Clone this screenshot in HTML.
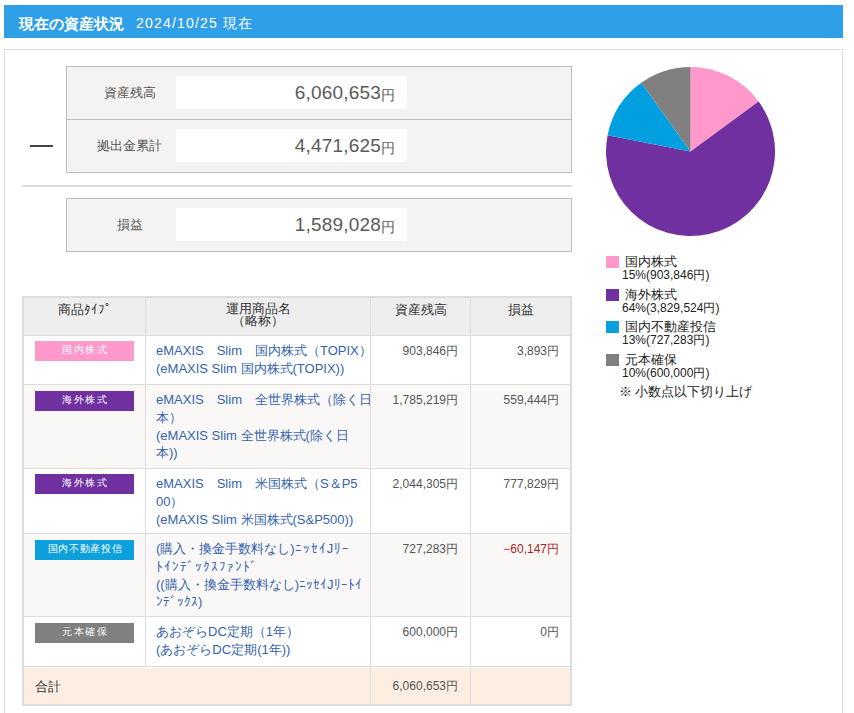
<!DOCTYPE html>
<html><head><meta charset="utf-8">
<style>
*{margin:0;padding:0;box-sizing:border-box}
html,body{width:854px;height:713px;overflow:hidden;background:#fff;font-family:"Liberation Sans",sans-serif;color:#333}
.abs{position:absolute}
#bar{left:4px;top:5px;width:839px;height:33px;background:#2fa0e7;color:#fff}
#bar .t{position:absolute;left:15px;top:10px;font-size:15px;font-weight:bold;line-height:17px;white-space:nowrap}
#bar .d{position:absolute;left:132px;top:10px;font-size:14px;line-height:17px;letter-spacing:1.2px;white-space:nowrap}
#box{left:4px;top:49px;width:839px;height:700px;border:1px solid #ddd}
.sum{left:66px;width:506px;background:#f4f3f2;border:1px solid #bdbdbd}
.srow{position:absolute;left:0;width:504px;height:52px}
.lab{position:absolute;left:0;width:125px;top:18px;text-align:center;font-size:13px;line-height:16px;color:#555;white-space:nowrap}
.val{position:absolute;left:109px;top:9px;width:231px;height:33px;background:#fff;text-align:right;padding-right:12px;white-space:nowrap;color:#5a5a5a}
.val .n{font-size:19px;line-height:33px;letter-spacing:0.2px}
.val .y{font-size:14px;position:relative;top:1px}
#minus{left:30px;top:145px;width:23px;height:2px;background:#444}
#div{left:22px;top:185px;width:550px;height:2px;background:#ddd}
#tbl{left:22px;top:296px;width:550px;border:2px solid #ddd;border-collapse:collapse}
.cell{position:absolute}
.badge{position:absolute;left:11px;width:99px;height:20px;color:#fff;font-size:10px;line-height:18px;text-align:center;letter-spacing:1.5px;white-space:nowrap;text-indent:1px}
.nm{position:absolute;left:10px;font-size:13px;line-height:17.8px;color:#3563ad;white-space:nowrap;overflow:hidden;width:214px}
.num{position:absolute;right:11px;font-size:12px;line-height:16px;color:#555;white-space:nowrap}
.hd{position:absolute;top:0;height:37px;font-size:13px;line-height:13px;color:#333;text-align:center;white-space:nowrap}
#legend{left:606px;top:255px;font-size:12px;color:#222}
.li{position:absolute;left:0;white-space:nowrap}
.sq{position:absolute;left:0;top:1px;width:13px;height:12px}
.l1{position:absolute;left:19px;top:0;font-size:13px;line-height:14px}
.l2{position:absolute;left:16px;top:14px;font-size:12px;line-height:13px;letter-spacing:0}
.tofu .j{letter-spacing:.25em;-webkit-text-stroke:.9px currentColor}.tofu .k{letter-spacing:-.25em}
</style></head><body>
<div id="bar" class="abs"><span class="t"><span class="j">現在の資産状況</span></span><span class="d">2024/10/25 <span class="j">現在</span></span></div>
<div id="box" class="abs"></div>

<div class="abs sum" style="top:66px;height:107px">
  <div class="srow" style="top:0"><div class="lab"><span class="j">資産残高</span></div><div class="val"><span class="n">6,060,653</span><span class="y"><span class="j">円</span></span></div></div>
  <div class="abs" style="left:0;top:52px;width:504px;height:1px;background:#bdbdbd"></div>
  <div class="srow" style="top:53px"><div class="lab"><span class="j">拠出金累計</span></div><div class="val"><span class="n">4,471,625</span><span class="y"><span class="j">円</span></span></div></div>
</div>
<div id="minus" class="abs"></div>
<div id="div" class="abs"></div>
<div class="abs sum" style="top:198px;height:54px">
  <div class="srow" style="top:0"><div class="lab"><span class="j">損益</span></div><div class="val"><span class="n">1,589,028</span><span class="y"><span class="j">円</span></span></div></div>
</div>

<!-- TABLE -->
<div id="table" class="abs" style="left:22px;top:296px;width:550px;height:410px;background:#ddd">
<div class="cell" style="left:2px;top:2px;width:121px;height:37px;background:#eee"></div>
<div class="cell" style="left:124px;top:2px;width:224px;height:37px;background:#eee"></div>
<div class="cell" style="left:349px;top:2px;width:99px;height:37px;background:#eee"></div>
<div class="cell" style="left:449px;top:2px;width:99px;height:37px;background:#eee"></div>
<div class="hd" style="left:2px;width:121px;top:7px"><span class="j">商品</span><span class="k">ﾀｲﾌﾟ</span></div>
<div class="hd" style="left:124px;width:224px;top:7px;line-height:12px"><span class="j">運用商品名</span><br><span class="j">（略称）</span></div>
<div class="hd" style="left:349px;width:99px;top:7px"><span class="j">資産残高</span></div>
<div class="hd" style="left:449px;width:99px;top:7px"><span class="j">損益</span></div>
<div class="cell" style="left:2px;top:40px;width:121px;height:48px;background:#fff"></div>
<div class="cell" style="left:124px;top:40px;width:224px;height:48px;background:#fff"></div>
<div class="cell" style="left:349px;top:40px;width:99px;height:48px;background:#fff"></div>
<div class="cell" style="left:449px;top:40px;width:99px;height:48px;background:#fff"></div>
<div class="badge" style="left:13px;top:45px;background:#ff99cc"><span class="j">国内株式</span></div>
<div class="nm" style="left:134px;top:46px">eMAXIS　Slim　<span class="j">国内株式（</span>TOPIX<span class="j">）</span><br>(eMAXIS Slim <span class="j">国内株式</span>(TOPIX))</div>
<div class="num" style="right:114px;top:47px">903,846<span class="j">円</span></div>
<div class="num" style="right:13px;top:47px">3,893<span class="j">円</span></div>
<div class="cell" style="left:2px;top:89px;width:121px;height:83px;background:#f9f8f7"></div>
<div class="cell" style="left:124px;top:89px;width:224px;height:83px;background:#f9f8f7"></div>
<div class="cell" style="left:349px;top:89px;width:99px;height:83px;background:#f9f8f7"></div>
<div class="cell" style="left:449px;top:89px;width:99px;height:83px;background:#f9f8f7"></div>
<div class="badge" style="left:13px;top:95px;background:#7030a0"><span class="j">海外株式</span></div>
<div class="nm" style="left:134px;top:95px">eMAXIS　Slim　<span class="j">全世界株式（除く日</span><br><span class="j">本）</span><br>(eMAXIS Slim <span class="j">全世界株式</span>(<span class="j">除く日</span><br><span class="j">本</span>))</div>
<div class="num" style="right:114px;top:96px">1,785,219<span class="j">円</span></div>
<div class="num" style="right:13px;top:96px">559,444<span class="j">円</span></div>
<div class="cell" style="left:2px;top:173px;width:121px;height:64px;background:#fff"></div>
<div class="cell" style="left:124px;top:173px;width:224px;height:64px;background:#fff"></div>
<div class="cell" style="left:349px;top:173px;width:99px;height:64px;background:#fff"></div>
<div class="cell" style="left:449px;top:173px;width:99px;height:64px;background:#fff"></div>
<div class="badge" style="left:13px;top:178px;background:#7030a0"><span class="j">海外株式</span></div>
<div class="nm" style="left:134px;top:179px">eMAXIS　Slim　<span class="j">米国株式（</span>S<span class="j">＆</span>P5<br>00<span class="j">）</span><br>(eMAXIS Slim <span class="j">米国株式</span>(S&amp;P500))</div>
<div class="num" style="right:114px;top:180px">2,044,305<span class="j">円</span></div>
<div class="num" style="right:13px;top:180px">777,829<span class="j">円</span></div>
<div class="cell" style="left:2px;top:238px;width:121px;height:82px;background:#f9f8f7"></div>
<div class="cell" style="left:124px;top:238px;width:224px;height:82px;background:#f9f8f7"></div>
<div class="cell" style="left:349px;top:238px;width:99px;height:82px;background:#f9f8f7"></div>
<div class="cell" style="left:449px;top:238px;width:99px;height:82px;background:#f9f8f7"></div>
<div class="badge" style="left:13px;top:244px;background:#0ca0dc;letter-spacing:0.7px"><span class="j">国内不動産投信</span></div>
<div class="nm" style="left:134px;top:244px">(<span class="j">購入・換金手数料なし</span>)<span style="letter-spacing:1px"><span class="k">ﾆｯｾｲ</span>J<span class="k">ﾘｰ</span></span><br><span style="letter-spacing:1px"><span class="k">ﾄｲﾝﾃﾞｯｸｽﾌｧﾝﾄﾞ</span></span><br>((<span class="j">購入・換金手数料なし</span>)<span class="k">ﾆｯｾｲ</span>J<span class="k">ﾘｰﾄｲ</span><br><span class="k">ﾝﾃﾞｯｸｽ</span>)</div>
<div class="num" style="right:114px;top:245px">727,283<span class="j">円</span></div>
<div class="num" style="right:13px;top:245px;color:#b01e1e">−60,147<span class="j">円</span></div>
<div class="cell" style="left:2px;top:321px;width:121px;height:49px;background:#fff"></div>
<div class="cell" style="left:124px;top:321px;width:224px;height:49px;background:#fff"></div>
<div class="cell" style="left:349px;top:321px;width:99px;height:49px;background:#fff"></div>
<div class="cell" style="left:449px;top:321px;width:99px;height:49px;background:#fff"></div>
<div class="badge" style="left:13px;top:327px;background:#808080"><span class="j">元本確保</span></div>
<div class="nm" style="left:134px;top:327px"><span class="j">あおぞら</span>DC<span class="j">定期（</span>1<span class="j">年）</span><br>(<span class="j">あおぞら</span>DC<span class="j">定期</span>(1<span class="j">年</span>))</div>
<div class="num" style="right:114px;top:328px">600,000<span class="j">円</span></div>
<div class="num" style="right:13px;top:328px">0<span class="j">円</span></div>
<div class="cell" style="left:2px;top:371px;width:546px;height:1px;background:#fff"></div>
<div class="cell" style="left:2px;top:372px;width:346px;height:36px;background:#fdeee2"></div>
<div class="cell" style="left:349px;top:372px;width:99px;height:36px;background:#fdeee2"></div>
<div class="cell" style="left:449px;top:372px;width:99px;height:36px;background:#fdeee2"></div>
<div class="nm" style="left:13px;top:382px;color:#333"><span class="j">合計</span></div>
<div class="num" style="right:114px;top:382px">6,060,653<span class="j">円</span></div>
</div>

<svg class="abs" style="left:606px;top:66.5px" width="169" height="169" viewBox="0 0 169 169">
<path fill="#ff99cc" d="M84.5,84.5 L84.50,0.00 A84.5,84.5 0 0 1 152.59,34.46 Z"/>
<path fill="#7030a0" d="M84.5,84.5 L152.59,34.46 A84.5,84.5 0 1 1 1.60,68.15 Z"/>
<path fill="#00a0e0" d="M84.5,84.5 L1.60,68.15 A84.5,84.5 0 0 1 35.26,15.83 Z"/>
<path fill="#808080" d="M84.5,84.5 L35.26,15.83 A84.5,84.5 0 0 1 84.50,0.00 Z"/>
</svg>

<div id="legend" class="abs">
<div class="li" style="top:0px"><div class="sq" style="background:#ff99cc"></div><div class="l1"><span class="j">国内株式</span></div><div class="l2">15%(903,846<span class="j">円</span>)</div></div>
<div class="li" style="top:32.5px"><div class="sq" style="background:#7030a0"></div><div class="l1"><span class="j">海外株式</span></div><div class="l2">64%(3,829,524<span class="j">円</span>)</div></div>
<div class="li" style="top:65px"><div class="sq" style="background:#0ca0dc"></div><div class="l1"><span class="j">国内不動産投信</span></div><div class="l2">13%(727,283<span class="j">円</span>)</div></div>
<div class="li" style="top:97.5px"><div class="sq" style="background:#808080"></div><div class="l1"><span class="j">元本確保</span></div><div class="l2">10%(600,000<span class="j">円</span>)</div></div>
<div class="li" style="top:130px;left:13px;font-size:12.5px;line-height:14px"><span class="j">※</span> <span class="j">小数点以下切り上げ</span></div>
</div>
<script>(function(){var s=document.createElement('span');s.style.cssText='position:absolute;left:0;top:0;font:100px "Liberation Sans",sans-serif;white-space:pre;visibility:hidden';s.textContent='\u56fd';document.body.appendChild(s);var w=s.getBoundingClientRect().width;document.body.removeChild(s);if(w<90){document.documentElement.className+=' tofu';}})();</script>
</body></html>
